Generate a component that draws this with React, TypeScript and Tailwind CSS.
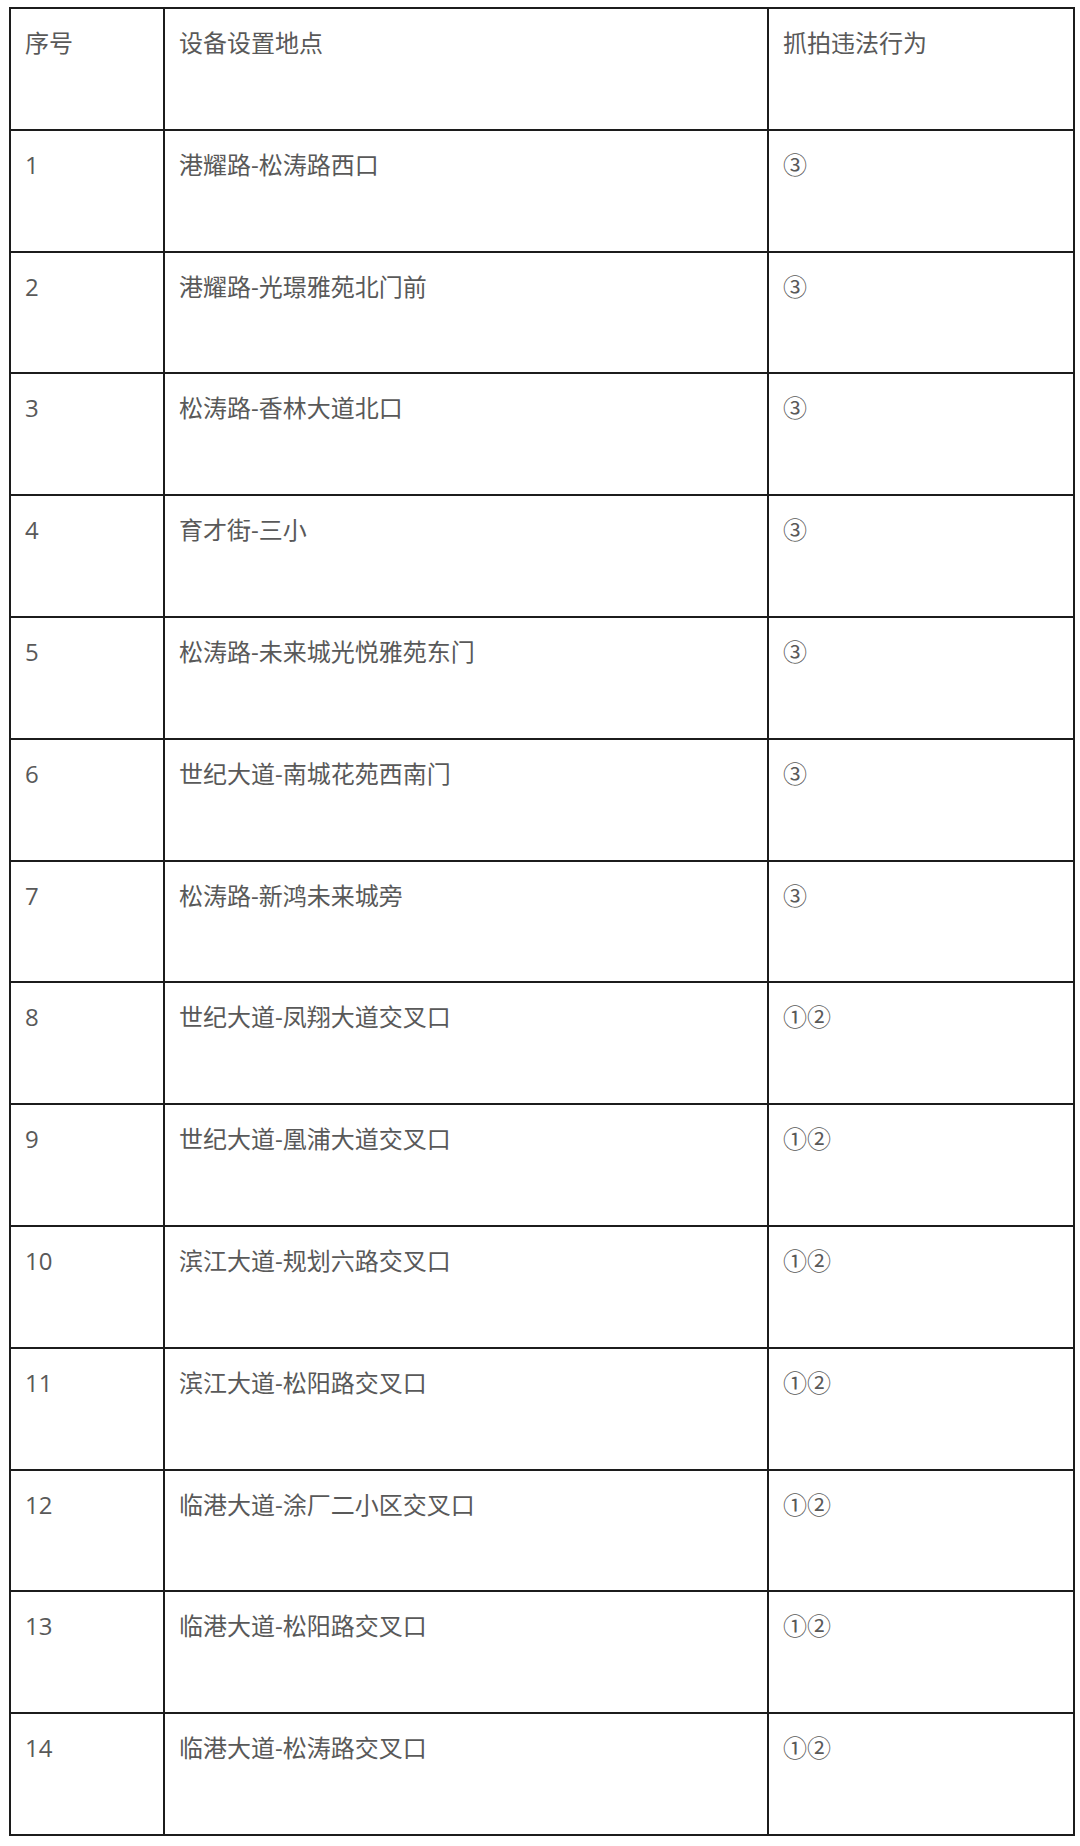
const ROWS = [
  ['1', '港耀路-松涛路西口', '③'],
  ['2', '港耀路-光璟雅苑北门前', '③'],
  ['3', '松涛路-香林大道北口', '③'],
  ['4', '育才街-三小', '③'],
  ['5', '松涛路-未来城光悦雅苑东门', '③'],
  ['6', '世纪大道-南城花苑西南门', '③'],
  ['7', '松涛路-新鸿未来城旁', '③'],
  ['8', '世纪大道-凤翔大道交叉口', '①②'],
  ['9', '世纪大道-凰浦大道交叉口', '①②'],
  ['10', '滨江大道-规划六路交叉口', '①②'],
  ['11', '滨江大道-松阳路交叉口', '①②'],
  ['12', '临港大道-涂厂二小区交叉口', '①②'],
  ['13', '临港大道-松阳路交叉口', '①②'],
  ['14', '临港大道-松涛路交叉口', '①②'],
]

const HEADER = ['序号', '设备设置地点', '抓拍违法行为']

export default function App() {
  const cell = 'border-2 border-[#1c1c1c] align-top pl-[14px] pt-[16px] h-[121.8px]'
  return (
    <div
      className="min-h-screen bg-white pt-[7px] pl-[9px] text-[#595959]"
      style={{ fontFamily: '"Open Sans", "Noto Sans CJK SC", sans-serif' }}
    >
      <table className="border-collapse w-[1064px] table-fixed text-[24px] leading-[36px]">
        <colgroup>
          <col className="w-[154px]" />
          <col className="w-[604px]" />
          <col className="w-[306px]" />
        </colgroup>
        <tbody>
          <tr>
            {HEADER.map((h) => (
              <td key={h} className={cell}>{h}</td>
            ))}
          </tr>
          {ROWS.map(([n, place, act]) => (
            <tr key={n}>
              <td className={cell}>{n}</td>
              <td className={cell}>{place}</td>
              <td className={cell}>{act}</td>
            </tr>
          ))}
        </tbody>
      </table>
    </div>
  )
}
